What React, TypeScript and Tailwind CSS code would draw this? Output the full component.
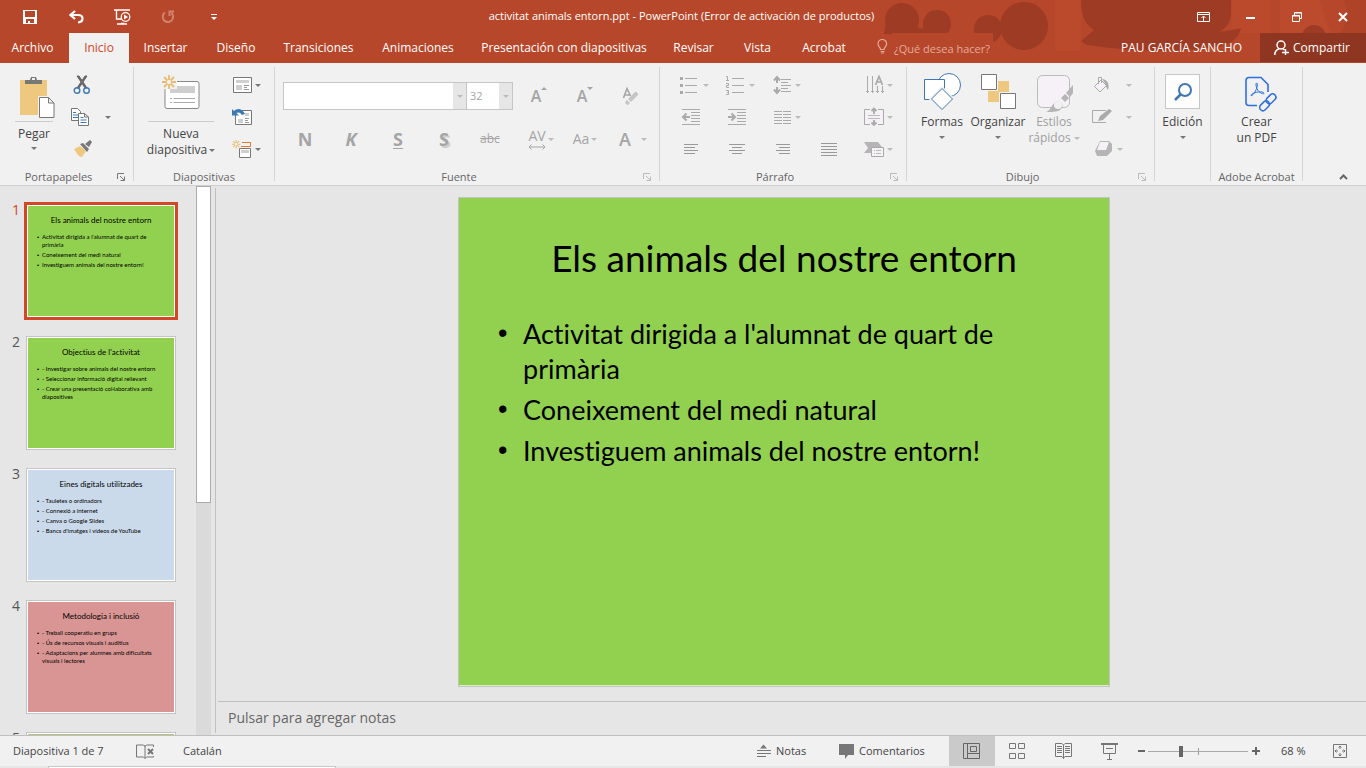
import type { ReactNode } from "react";
import clsx from "clsx";

interface IconProps {
  w: number;
  h: number;
  className?: string;
  children: ReactNode;
}

const Icon = ({ w, h, className, children }: IconProps) => (
  <svg
    width={w}
    height={h}
    viewBox={`0 0 ${w} ${h}`}
    fill="none"
    className={clsx("shrink-0", className)}
    aria-hidden="true"
  >
    {children}
  </svg>
);

const Caret = ({ className }: { className?: string }) => (
  <Icon w={6} h={3} className={className ?? "text-[#777]"}>
    <path d="M0 0h6L3 3z" fill="currentColor" />
  </Icon>
);

const IconButton = ({
  label,
  className,
  children,
}: {
  label: string;
  className?: string;
  children: ReactNode;
}) => (
  <button
    type="button"
    aria-label={label}
    className={clsx("flex items-center", className)}
  >
    {children}
  </button>
);

/* ---------- Title bar ---------- */

const HeaderArt = () => (
  <svg
    className="absolute right-0 top-0 h-[51px] w-[496px]"
    viewBox="0 0 496 51"
    aria-hidden="true"
  >
    <rect width="496" height="51" fill="#b7472a" />
    <path d="M185 0h26v51h-26zM362 0h38v33h-38z" fill="#bb4a2d" />
    <path d="M410 0h40l10 33h-50z" fill="#bc4b2e" />
    <g fill="#9e3b24">
      <circle cx="32" cy="20" r="17" />
      <circle cx="67" cy="24" r="14" />
      <path d="M16 22l-2 12 20 1 44-2z" />
      <circle cx="118" cy="29" r="14" />
      <circle cx="154" cy="26" r="24" />
      <path d="M211 0h150v12c0 10-5 17-13 20 9-1 15-2 23-4-2 10-9 15-20 18-40 7-90 6-132-1-3 0-5-2-8-4l13-11C214 24 211 14 211 0z" />
      <circle cx="444" cy="37" r="12" />
      <path d="M474 0h22v33h-26c6-8 8-20 4-33z" opacity=".3" />
    </g>
  </svg>
);

const TitleBar = () => (
  <div className="relative flex h-[33px] items-center text-white">
    <div className="flex flex-1 items-center pl-[23px]">
      <IconButton label="Guardar" className="w-[46px]">
        <Icon w={14} h={14}>
          <path
            d="M0 0h14v14H0zM2 1v6h10V1zM3 9v4h2v-2h2v2h4V9z"
            fill="currentColor"
            fillRule="evenodd"
          />
        </Icon>
      </IconButton>
      <IconButton label="Deshacer" className="w-[45px]">
        <Icon w={15} h={14}>
          <path
            d="M6 1L1.500 5 6 9M2 5h7c6 0 6 7 0 7.500"
            stroke="currentColor"
            strokeWidth="2.200"
          />
        </Icon>
      </IconButton>
      <IconButton label="Presentación desde el principio" className="w-[47px]">
        <Icon w={17} h={16}>
          <path d="M0 1h16M2.500 1v9h5M7 14.500h3M3 15h10" stroke="currentColor" strokeWidth="1.400" />
          <circle cx="11.500" cy="8" r="4.300" stroke="currentColor" strokeWidth="1.200" />
          <path d="M10 5.500v5L14 8z" fill="currentColor" />
        </Icon>
      </IconButton>
      <IconButton label="Rehacer" className="w-[50px] text-[#d28370]">
        <Icon w={14} h={14}>
          <path
            d="M4 2.500A5.200 5.200 0 1 0 10.500 3M8.500 6V1.500H13"
            stroke="currentColor"
            strokeWidth="2"
          />
        </Icon>
      </IconButton>
      <IconButton label="Personalizar barra de acceso rápido">
        <Icon w={6} h={6}>
          <path d="M0 .5h6" stroke="currentColor" />
          <path d="M0 3h6L3 6z" fill="currentColor" />
        </Icon>
      </IconButton>
    </div>
    <h1 className="whitespace-nowrap pr-2 text-[11px]">
      activitat animals entorn.ppt - PowerPoint (Error de activación de productos)
    </h1>
    <div className="flex flex-1 items-center justify-end gap-9 pr-[18px]">
      <IconButton label="Opciones de presentación de la cinta">
        <Icon w={13} h={10}>
          <path d="M.5.500h12v9H.500zM.500 2.500h12M6.500 9V4.500M4.500 6l2-2 2 2" stroke="currentColor" />
        </Icon>
      </IconButton>
      <IconButton label="Minimizar">
        <Icon w={10} h={10}>
          <path d="M0 6h9" stroke="currentColor" strokeWidth="2" />
        </Icon>
      </IconButton>
      <IconButton label="Restaurar">
        <Icon w={10} h={10}>
          <path d="M.5 3.500h7v6h-7zM0 4h8M2.500 3V.500h7v6H8M2.500 1H9" stroke="currentColor" />
        </Icon>
      </IconButton>
      <IconButton label="Cerrar">
        <Icon w={10} h={10}>
          <path d="M1 1l8 8M9 1L1 9" stroke="currentColor" strokeWidth="2" />
        </Icon>
      </IconButton>
    </div>
  </div>
);

const tabs = [
  { name: "Archivo", width: "w-[65px] pr-2" },
  { name: "Inicio", width: "w-[60px]", active: true },
  { name: "Insertar", width: "w-[73px]" },
  { name: "Diseño", width: "w-[68px]" },
  { name: "Transiciones", width: "w-[97px]" },
  { name: "Animaciones", width: "w-[102px]" },
  { name: "Presentación con diapositivas", width: "w-[190px]" },
  { name: "Revisar", width: "w-[69px]" },
  { name: "Vista", width: "w-[59px]" },
  { name: "Acrobat", width: "w-[74px]" },
];

const TabBar = () => (
  <div className="relative flex h-[30px] text-xs text-white">
    <nav className="flex pl-1">
      {tabs.map((tab) => (
        <button
          key={tab.name}
          type="button"
          className={clsx(
            "whitespace-nowrap text-center",
            tab.width,
            tab.active && "bg-[#f1f1f1] text-[#d24726]"
          )}
        >
          {tab.name}
        </button>
      ))}
    </nav>
    <label className="flex h-[19px] items-center gap-1 pl-4 text-[#e3aa9c]">
      <Icon w={11} h={15} className="mt-2">
        <path
          d="M3.500 10.500C3.500 8 1 7.500 1 4.800a4.300 4.300 0 0 1 8.600 0c0 2.700-2.500 3.200-2.500 5.700zM3.500 12.500h4M4 14h3"
          stroke="currentColor"
          strokeWidth="1.200"
        />
      </Icon>
      <input
        type="text"
        aria-label="¿Qué desea hacer?"
        placeholder="¿Qué desea hacer?"
        className="h-[30px] w-[101px] self-start bg-[#b7472a] pl-[2px] text-[11px] placeholder:text-[#e3aa9c]"
      />
    </label>
    <div className="ml-auto flex items-center">
      <button type="button" className="whitespace-nowrap pr-[18px]">
        PAU GARCÍA SANCHO
      </button>
      <button
        type="button"
        className="flex h-[29px] w-[106px] items-center gap-1 self-start bg-[#8e3621] pl-[14px]"
      >
        <Icon w={15} h={15}>
          <circle cx="7" cy="5" r="4" stroke="currentColor" strokeWidth="1.500" />
          <path d="M.8 15c0-4 2-5.500 4.500-6.500M8.500 8.500l2 1.500M8 12.500h7M11.500 9v6" stroke="currentColor" strokeWidth="1.500" />
        </Icon>
        Compartir
      </button>
    </div>
  </div>
);

/* ---------- Ribbon ---------- */

const Launcher = ({ muted }: { muted?: boolean }) => (
  <button
    type="button"
    aria-label="Más opciones"
    className={clsx("absolute right-2 top-1", muted ? "text-[#bbb]" : "text-[#777]")}
  >
    <Icon w={8} h={8}>
      <path d="M.5 6V.500H7M3 3l4 4M7.500 3.500v4h-4" stroke="currentColor" />
    </Icon>
  </button>
);

interface GroupProps {
  title?: string;
  width: string;
  launcher?: "normal" | "muted";
  children: ReactNode;
}

const Group = ({ title, width, launcher, children }: GroupProps) => (
  <section className={clsx("flex shrink-0", width)}>
    <div className="flex min-w-0 flex-1 flex-col">
      <div className="flex h-[98px] pt-[2px]">{children}</div>
      <div
        className={clsx(
          "relative mt-1 h-4 whitespace-nowrap text-center text-[11px] leading-4 text-[#666]",
          launcher && "pr-4"
        )}
      >
        {title}
        {launcher && <Launcher muted={launcher === "muted"} />}
      </div>
    </div>
    <div className="h-[114px] w-px bg-[#d4d4d4]" />
  </section>
);

const Clipboard = () => (
  <Group title="Portapapeles" width="w-[134px]" launcher="normal">
    <button
      type="button"
      className="ml-[15px] flex w-[38px] flex-col items-center pt-1 leading-4"
    >
      <Icon w={38} h={48} className="ml-1">
        <path d="M3 7h27v35H3z" fill="#edc87e" />
        <path d="M8 11V7h5l1-3h5l1 3h5v4z" fill="#777" />
        <path d="M15 5h3v2h-3z" fill="#f1f1f1" />
        <path d="M21 23h17v23H21z" fill="#f1f1f1" />
        <path d="M22.500 24.500h9l5.500 5.500v14.500H22.500zM31.500 24.500V30H37" fill="#fff" stroke="#777" />
      </Icon>
      <span className="h-px w-full bg-[#cdcdcd]" />
      <span className="mt-1">Pegar</span>
      <Caret className="mt-[5px] text-[#777]" />
    </button>
    <div className="ml-[18px] flex w-[22px] flex-col">
      <IconButton label="Cortar" className="h-8">
        <Icon w={22} h={20}>
          <path d="M6 1l2 0 8 12h-2zM16 1h-2L6 13h2z" fill="#666" stroke="#666" />
          <circle cx="6" cy="15.500" r="2.800" stroke="#3e78b3" strokeWidth="1.400" />
          <circle cx="15.500" cy="15.500" r="2.800" stroke="#3e78b3" strokeWidth="1.400" />
        </Icon>
      </IconButton>
      <IconButton label="Copiar" className="h-8">
        <Icon w={20} h={20}>
          <path d="M.5 1.500h6l3 3v9h-9z" fill="#fff" stroke="#777" />
          <path d="M2 5.500h3M2 8h5M2 10.500h5" stroke="#3e78b3" />
          <path d="M7.500 6.500h6l4 3.500v8.500h-10zM13.500 6.500V10h4" fill="#fff" stroke="#777" />
          <path d="M9.500 10.500h3M9.500 13h6M9.500 15.500h6" stroke="#3e78b3" />
        </Icon>
      </IconButton>
      <IconButton label="Copiar formato" className="h-8">
        <Icon w={22} h={18}>
          <path d="M3 9l6-3 6 5-4 6c-3 0-5-3-8-8z" fill="#edc87e" />
          <path d="M9 4l3-1 6 6-2 3zM14 4l5-4 2 2-3 5z" fill="#777" />
        </Icon>
      </IconButton>
    </div>
    <button type="button" aria-label="Opciones de copiar" className="ml-3 self-center">
      <Caret />
    </button>
  </Group>
);

const Star = () => (
  <path
    d="M7 0v5M7 9v5M0 7h5M9 7h5M2 2l3.500 3.500M12 2L8.500 5.500M2 12l3.500-3.500M12 12L8.500 8.500"
    stroke="#e8bd72"
    strokeWidth="1.800"
  />
);

const Slides = () => (
  <Group title="Diapositivas" width="w-[141px]">
    <button
      type="button"
      className="ml-[14px] flex w-[66px] flex-col items-center whitespace-nowrap pt-1 leading-4"
    >
      <Icon w={40} h={48}>
        <rect x="4" y="8.500" width="34" height="27" rx="2" fill="#fff" stroke="#888" />
        <path d="M9 13h25v7H9z" fill="#cfcfcf" />
        <path d="M9 25.500h2M12.500 25.500H34M9 29.500h2M12.500 29.500H34" stroke="#aaa" />
        <path d="M1 2h15v14H1z" fill="#f1f1f1" />
        <g transform="translate(1 2)">
          <Star />
        </g>
      </Icon>
      <span className="h-px w-full bg-[#cdcdcd]" />
      <span className="mt-1">Nueva</span>
      <span className="flex items-center gap-[2px]">
        diapositiva
        <Caret />
      </span>
    </button>
    <div className="ml-[18px] flex flex-col">
      <IconButton label="Diseño" className="h-8 gap-[2px]">
        <Icon w={21} h={20}>
          <path d="M1.500 2.500h18v15h-18z" fill="#fff" stroke="#777" />
          <path d="M4 5h13v3H4zM4 10h6v5H4z" fill="#cfcfcf" />
          <path d="M12 10.500h5M12 12.500h3M12 14.500h5" stroke="#999" />
        </Icon>
        <Caret />
      </IconButton>
      <IconButton label="Restablecer" className="h-8">
        <Icon w={21} h={20}>
          <path d="M3.500 3.500h16v14h-16z" fill="#fff" stroke="#777" />
          <path d="M13 6h4v3h-4zM6 12h5v4H6z" fill="#cfcfcf" />
          <path d="M13 11.500h4M13 13.500h3M13 15.500h4" stroke="#999" />
          <path d="M0 2l2 2c3-3 8-3 11 3l-3 1C8 5 6 5 4.500 6L7 8.500H0z" fill="#3e78b3" />
        </Icon>
      </IconButton>
      <IconButton label="Sección" className="h-8 gap-[2px]">
        <Icon w={21} h={20}>
          <path d="M10 3.500h8.500v4H9" stroke="#e07b2e" />
          <path d="M7.500 9.500h11v9h-11z" fill="#fff" stroke="#777" />
          <path d="M9 11h8v3H9z" fill="#cfcfcf" />
          <g transform="translate(0 1) scale(.6)">
            <Star />
          </g>
        </Icon>
        <Caret />
      </IconButton>
    </div>
  </Group>
);

const cell = "flex h-8 w-[46px] items-center justify-center";

const FontGroup = () => (
  <Group title="Fuente" width="w-[385px]" launcher="muted">
    <div className="flex flex-col gap-[11px] pl-[7px] pt-[11px] text-[#a5a5a5]">
      <div className="flex h-8 items-center">
        <div className="flex w-[232px] pl-px">
          <div className="relative">
            <select
              aria-label="Fuente"
              className="h-7 w-[184px] appearance-none border border-[#c6c6c6] bg-white"
            >
              <option></option>
            </select>
            <span className="pointer-events-none absolute inset-y-px right-px flex w-[13px] items-center justify-center bg-[#e6e6e6]">
              <Caret className="text-[#bbb]" />
            </span>
          </div>
          <div className="relative">
            <select
              aria-label="Tamaño de fuente"
              className="h-7 w-[46px] appearance-none border border-l-0 border-[#c6c6c6] bg-white pl-[3px] text-[11px]"
            >
              <option>32</option>
            </select>
            <span className="pointer-events-none absolute inset-y-px right-px flex w-[13px] items-center justify-center bg-[#e6e6e6]">
              <Caret className="text-[#bbb]" />
            </span>
          </div>
        </div>
        <IconButton label="Aumentar tamaño de fuente" className={clsx(cell, "pl-1")}>
          <span className="text-base font-semibold">A</span>
          <Icon w={6} h={18}>
            <path d="M0 3h6L3 0z" fill="currentColor" />
          </Icon>
        </IconButton>
        <IconButton label="Disminuir tamaño de fuente" className={clsx(cell, "pl-1")}>
          <span className="text-base font-semibold">A</span>
          <Icon w={6} h={18}>
            <path d="M0 0h6L3 3z" fill="currentColor" />
          </Icon>
        </IconButton>
        <IconButton label="Borrar formato" className={clsx(cell, "pl-1")}>
          <Icon w={18} h={20}>
            <path d="M1.500 12L5 2.500 8.500 10M3 9h5" stroke="currentColor" strokeWidth="1.600" />
            <path d="M6 13l7-7c1-1 4 2 3 3l-7 7z" fill="#c5c5c8" />
            <path d="M5 14l3 3-2 2c-1 0-3-2-3-3z" fill="#c5c5c8" />
          </Icon>
        </IconButton>
      </div>
      <div className="flex h-8 items-center">
        <button type="button" className={clsx(cell, "text-lg font-bold")}>N</button>
        <button type="button" className={clsx(cell, "text-lg font-bold italic")}>K</button>
        <button type="button" className={clsx(cell, "pl-[2px] text-lg font-bold underline decoration-1 underline-offset-2")}>S</button>
        <button type="button" className={clsx(cell, "pl-[2px] text-lg font-bold [text-shadow:2px_2px_1px_#ccc]")}>S</button>
        <button type="button" className={clsx(cell, "pl-[2px] text-xs line-through")}>abc</button>
        <IconButton label="Espaciado entre caracteres" className={cell}>
          <span className="flex flex-col items-center pl-3 text-sm leading-4">
            AV
            <Icon w={18} h={6}>
              <path d="M1 3h16M3.500.500L1 3l2.500 2.500M14.500.500L17 3l-2.500 2.500" stroke="currentColor" />
            </Icon>
          </span>
          <Caret className="ml-[2px] text-[#bbb]" />
        </IconButton>
        <button type="button" className={clsx(cell, "gap-[2px] pl-2 text-sm")}>
          Aa
          <Caret className="text-[#bbb]" />
        </button>
        <button type="button" className={clsx(cell, "gap-[10px] pl-3 text-lg font-semibold")}>
          A
          <Caret className="text-[#bbb]" />
        </button>
      </div>
    </div>
  </Group>
);

const paragraphTools: { label: string; caret?: boolean; art: ReactNode }[][] = [
  [
    {
      label: "Viñetas",
      caret: true,
      art: (
        <>
          <path d="M5 3.500h12M5 10.500h12M5 17.500h12" stroke="#aaa" />
          <path d="M0 2h3v3H0zM0 9h3v3H0zM0 16h3v3H0z" fill="#aaa" />
        </>
      ),
    },
    {
      label: "Numeración",
      caret: true,
      art: (
        <path
          d="M6 3.500h12M6 10.500h12M6 17.500h12M0 1.500h1.500v4M0 5.500h3M0 8.500h2.500v2H.500v2H3M0 15.500h2.500v4H0M1 17.500h1"
          stroke="#aaa"
        />
      ),
    },
    {
      label: "Interlineado",
      caret: true,
      art: (
        <>
          <path d="M9 4.500h10M9 7.500h7M9 10.500h10M9 13.500h7M9 16.500h10" stroke="#aaa" />
          <path d="M5 2v6M2 5.500L5 2l3 3.500M5 12v6M2 14.500L5 18l3-3.500" stroke="#aaa" strokeWidth="2" />
        </>
      ),
    },
  ],
  [
    {
      label: "Disminuir nivel de lista",
      art: (
        <>
          <path d="M2 2.500h18M11 5.500h9M11 8.500h9M11 11.500h9M11 14.500h9M2 17.500h18" stroke="#aaa" />
          <path d="M10 10H3M6.500 6.500L3 10l3.500 3.500" stroke="#aaa" strokeWidth="2" />
        </>
      ),
    },
    {
      label: "Aumentar nivel de lista",
      art: (
        <>
          <path d="M2 2.500h18M11 5.500h9M11 8.500h9M11 11.500h9M11 14.500h9M2 17.500h18" stroke="#aaa" />
          <path d="M2 10h7M5.500 6.500L9 10l-3.500 3.500" stroke="#aaa" strokeWidth="2" />
        </>
      ),
    },
    {
      label: "Columnas",
      caret: true,
      art: (
        <path
          d="M2 4.500h8M11 4.500h8M2 7.500h8M11 7.500h8M2 10.500h8M11 10.500h8M2 13.500h8M11 13.500h8M2 16.500h8M11 16.500h8"
          stroke="#aaa"
        />
      ),
    },
  ],
  [
    {
      label: "Alinear a la izquierda",
      art: <path d="M4 5.500h14M4 8.500h11M4 11.500h14M4 14.500h11" stroke="#999" />,
    },
    {
      label: "Centrar",
      art: <path d="M3 5.500h16M6 8.500h10M3 11.500h16M6 14.500h10" stroke="#999" />,
    },
    {
      label: "Alinear a la derecha",
      art: <path d="M4 5.500h14M7 8.500h11M4 11.500h14M7 14.500h11" stroke="#999" />,
    },
    {
      label: "Justificar",
      art: <path d="M3 4.500h16M3 7.500h16M3 10.500h16M3 13.500h16M3 16.500h16" stroke="#999" />,
    },
  ],
];

const Paragraph = () => (
  <Group title="Párrafo" width="w-[247px]" launcher="muted">
    <div className="flex w-[184px] flex-col pl-2">
      {paragraphTools.map((row, i) => (
        <div key={i} className="flex h-8">
          {row.map((tool) => (
            <IconButton
              key={tool.label}
              label={tool.label}
              className="w-[46px] shrink-0 gap-[3px] pl-3"
            >
              <Icon w={20} h={20}>{tool.art}</Icon>
              {tool.caret && <Caret className="text-[#bbb]" />}
            </IconButton>
          ))}
        </div>
      ))}
    </div>
    <div className="ml-2 flex flex-col pl-3">
      <IconButton label="Dirección del texto" className="h-8 gap-[3px]">
        <Icon w={20} h={20}>
          <path d="M3.500 1v17M8.500 1v17M13.500 11v7M18.500 11v7M2 16.500h3M7 16.500h3M12 16.500h3M17 16.500h3" stroke="#aaa" />
          <path d="M11.500 10L15 1.500 18.500 10M13 7h4.500" stroke="#aaa" strokeWidth="1.700" />
        </Icon>
        <Caret className="text-[#bbb]" />
      </IconButton>
      <IconButton label="Alinear texto" className="h-8 gap-[3px]">
        <Icon w={20} h={20}>
          <path d="M6 2.500H.500v15H6M14 2.500h5.500v15H14" fill="#f6f1f6" stroke="#aaa" />
          <path d="M4 8.500h12M4 11.500h12" stroke="#bbb" />
          <path d="M10 1v6M7.500 4L10 1.500 12.500 4M10 13v5M7.500 15.500L10 18l2.500-2.500" stroke="#aaa" strokeWidth="1.800" />
        </Icon>
        <Caret className="text-[#bbb]" />
      </IconButton>
      <IconButton label="Convertir en SmartArt" className="h-8 gap-[3px]">
        <Icon w={20} h={20}>
          <path d="M0 3h14l4 5H8v6H0l4-5z" fill="#b5b5b5" />
          <path d="M7.500 8.500h12v9h-12z" fill="#f6f1f6" stroke="#aaa" />
          <path d="M10 11.500h1M12 11.500h5M10 14.500h1M12 14.500h5" stroke="#bbb" />
        </Icon>
        <Caret className="text-[#bbb]" />
      </IconButton>
    </div>
  </Group>
);

const LargeButton = ({
  className,
  icon,
  children,
}: {
  className: string;
  icon: ReactNode;
  children: ReactNode;
}) => (
  <button
    type="button"
    className={clsx(
      "flex flex-col items-center whitespace-nowrap pt-1 leading-4",
      className
    )}
  >
    {icon}
    {children}
  </button>
);

const Drawing = () => (
  <Group title="Dibujo" width="w-[248px]" launcher="muted">
    <LargeButton
      className="ml-[7px] w-14"
      icon={
        <Icon w={38} h={41}>
          <circle cx="26" cy="12" r="11.500" fill="#fff" stroke="#3e78b3" />
          <path d="M1.500 6.500h20v20h-20z" fill="#fff" stroke="#3e78b3" />
          <path d="M19 15l11 11-11 11L8 26z" fill="#fff" stroke="#f1f1f1" strokeWidth="3" />
          <path d="M19 15.500L29.500 26 19 36.500 8.500 26z" fill="#fff" stroke="#3e78b3" />
        </Icon>
      }
    >
      Formas
      <Caret className="mt-[6px] text-[#777]" />
    </LargeButton>
    <LargeButton
      className="w-14"
      icon={
        <Icon w={36} h={41}>
          <path d="M18 8h11v11H18zM8 18h11v11H8z" fill="#edc87e" />
          <path d="M1.500 1.500h15v15h-15zM20.500 20.500h15v15h-15z" fill="#fff" stroke="#777" />
        </Icon>
      }
    >
      Organizar
      <Caret className="mt-[6px] text-[#777]" />
    </LargeButton>
    <LargeButton
      className="w-14 text-[#a0a0a0]"
      icon={
        <Icon w={40} h={41}>
          <rect x="3.500" y="2.500" width="32" height="32" rx="5" fill="#f5f1f7" stroke="#bbb" />
          <path d="M39 12v8l-3 4-4-4zM31 21l4 4-4 4-4-4z" fill="#b5b5b5" />
          <path d="M12 39c5-1 6-10 12-11 5 1 6 6 2 9-3 2-9 2-14 2z" fill="#b5b5b5" />
          <circle cx="24" cy="32" r="4" fill="#f1f1f1" />
        </Icon>
      }
    >
      Estilos
      <span className="flex items-center gap-[3px]">
        rápidos
        <Caret className="text-[#bbb]" />
      </span>
    </LargeButton>
    <div className="ml-2 flex flex-col pl-[2px]">
      <IconButton label="Relleno de forma" className="h-8 w-10 justify-between">
        <Icon w={18} h={18}>
          <path d="M2.500 10.500L9 4l5.500 5.500L8 16zM6.500 8V1.500h3V7" fill="#f5f1f7" stroke="#aaa" />
          <path d="M10 3c5 0 8 5 6 11-2-2-2-5-3-7z" fill="#aaa" />
        </Icon>
        <Caret className="text-[#bbb]" />
      </IconButton>
      <IconButton label="Contorno de forma" className="h-8 w-10 justify-between">
        <Icon w={20} h={18}>
          <path d="M14 2.500H.500v12H14" stroke="#aaa" />
          <path d="M6 13l2-5 9-7 3 2-9 9z" fill="#aaa" />
        </Icon>
        <Caret className="text-[#bbb]" />
      </IconButton>
      <IconButton label="Efectos de forma" className="h-8 gap-1 pl-[2px]">
        <Icon w={19} h={18}>
          <path d="M6 1h9l3 3v7l-5 5H3l-2-5z" fill="#b5b5b5" />
          <path d="M6 2h9l-3 8H3z" fill="#f5f1f7" />
        </Icon>
        <Caret className="text-[#bbb]" />
      </IconButton>
    </div>
  </Group>
);

const Ribbon = () => (
  <div className="flex h-[123px] border-b border-[#d0d0d0] bg-[#f1f1f1] pt-1 text-xs text-[#444]">
    <Clipboard />
    <Slides />
    <FontGroup />
    <Paragraph />
    <Drawing />
    <Group width="w-[56px]">
      <LargeButton
        className="w-full"
        icon={
          <span className="mb-[5px] mt-px flex h-[35px] w-[35px] items-center justify-center border border-[#c6c6c6] bg-[#fdfdfd]">
            <Icon w={18} h={18}>
              <circle cx="11" cy="7" r="6" stroke="#3e78b3" strokeWidth="2" />
              <path d="M7 11l-6 6" stroke="#3e78b3" strokeWidth="2.500" />
            </Icon>
          </span>
        }
      >
        Edición
        <Caret className="mt-[6px] text-[#777]" />
      </LargeButton>
    </Group>
    <Group title="Adobe Acrobat" width="w-[92px]">
      <LargeButton
        className="w-full"
        icon={
          <Icon w={34} h={41} className="ml-2">
            <path d="M13 32.500H5a3 3 0 0 1-3-3v-22a3 3 0 0 1 3-3h12l7 7V19" stroke="#2f6fe0" strokeWidth="1.600" />
            <path
              d="M12.500 10c1.500 0 1 4-1 8-1.500 3-4 5.500-4.500 4.500s3-3 7-3.500 6.500.5 6 1.500-4-.5-6-3-2.500-7.500-1.500-7.500z"
              stroke="#2f6fe0"
            />
            <g stroke="#2f6fe0" strokeWidth="1.500">
              <rect x="-5" y="-3" width="11" height="6.500" rx="3.200" transform="translate(20 33) rotate(-45)" />
              <rect x="-5" y="-3" width="11" height="6.500" rx="3.200" transform="translate(26.500 26) rotate(-45)" />
            </g>
          </Icon>
        }
      >
        <span>Crear</span>
        <span>un PDF</span>
      </LargeButton>
    </Group>
    <button
      type="button"
      aria-label="Contraer la cinta de opciones"
      className="mb-[5px] ml-auto mr-[18px] self-end text-[#666]"
    >
      <Icon w={9} h={6}>
        <path d="M1 5l3.500-3.500L8 5" stroke="currentColor" strokeWidth="2" />
      </Icon>
    </button>
  </div>
);

/* ---------- Slides ---------- */

const slides = [
  {
    title: "Els animals del nostre entorn",
    color: "bg-[#92d14f]",
    points: [
      "Activitat dirigida a l'alumnat de quart de primària",
      "Coneixement del medi natural",
      "Investiguem animals del nostre entorn!",
    ],
  },
  {
    title: "Objectius de l'activitat",
    color: "bg-[#92d14f]",
    points: [
      "- Investigar sobre animals del nostre entorn",
      "- Seleccionar informació digital rellevant",
      "- Crear una presentació col·laborativa amb diapositives",
    ],
  },
  {
    title: "Eines digitals utilitzades",
    color: "bg-[#cadaea]",
    points: [
      "- Tauletes o ordinadors",
      "- Connexió a internet",
      "- Canva o Google Slides",
      "- Bancs d'imatges i vídeos de YouTube",
    ],
  },
  {
    title: "Metodologia i inclusió",
    color: "bg-[#d99593]",
    points: [
      "- Treball cooperatiu en grups",
      "- Ús de recursos visuals i auditius",
      "- Adaptacions per alumnes amb dificultats visuals i lectores",
    ],
  },
  { title: "", color: "bg-[#b3c283]", points: [] },
];

const slideFont = "font-[Lato,sans-serif] text-black [font-variant-ligatures:none]";

const Thumbnails = () => (
  <ol className="flex w-[196px] flex-col gap-[18px] overflow-hidden pl-3 pt-[18px]">
    {slides.map((slide, i) => (
      <li key={i} className="flex h-[114px] shrink-0">
        <span
          className={clsx(
            "w-[14px] text-sm leading-3",
            i === 0 ? "text-[#d24726]" : "text-[#555]"
          )}
        >
          {i + 1}
        </span>
        <button
          type="button"
          aria-label={`Diapositiva ${i + 1}`}
          className={clsx(
            "w-[150px] border bg-white p-px text-left",
            slideFont,
            i === 0 ? "border-[#d24726] ring-2 ring-[#d24726]" : "border-[#c4c4c4]"
          )}
        >
          <span className={clsx("flex h-full flex-col pt-2", slide.color)}>
            <span className="text-center text-[8px] leading-3">{slide.title}</span>
            <span className="flex flex-col gap-[2px] pl-[9px] pr-3 pt-[7px] text-[6px] leading-[8px]">
              {slide.points.map((point) => (
                <span key={point} className="flex">
                  <span className="w-[5px] shrink-0 font-['Liberation_Sans',sans-serif]">•</span>
                  {point}
                </span>
              ))}
            </span>
          </span>
        </button>
      </li>
    ))}
  </ol>
);

const Workspace = () => (
  <div className="flex min-h-0 flex-1 bg-[#e6e6e6]">
    <Thumbnails />
    <div className="w-[15px] bg-[#dadada]">
      <div className="h-[317px] border border-[#ababab] bg-white" />
    </div>
    <div className="my-[2px] ml-1 mr-[2px] w-px bg-[#c0c0c0]" />
    <main className="flex min-w-0 flex-1 flex-col">
      <div className="flex min-h-0 flex-1 justify-center pr-4 pt-[11px]">
        <article
          className={clsx(
            "h-[490px] w-[652px] shrink-0 border border-[#c3c3c3] bg-[#92d14f] shadow-[inset_0_-1px_#d8efc0]",
            slideFont
          )}
        >
          <h2 className="pt-9 text-center text-[37px] leading-[48px]">
            {slides[0].title}
          </h2>
          <ul className="flex flex-col gap-[6px] pl-[39px] pr-20 pt-[34px] text-[27px] leading-[35px]">
            {slides[0].points.map((point) => (
              <li key={point} className="flex">
                <span className="w-[25px] shrink-0 font-['Liberation_Sans',sans-serif]">•</span>
                {point}
              </li>
            ))}
          </ul>
        </article>
      </div>
      <p className="h-[34px] border-t border-[#c0c0c0] pl-[10px] text-sm leading-8 text-[#666]">
        Pulsar para agregar notas
      </p>
    </main>
  </div>
);

/* ---------- Status bar ---------- */

const StatusBar = () => (
  <footer className="bg-[#f1f1f1]">
    <div className="flex h-[31px] items-center border-t border-[#bfbfbf] text-[11px] text-[#444]">
      <span className="w-[136px] pl-[13px]">Diapositiva 1 de 7</span>
      <IconButton label="Revisión ortográfica" className="w-[47px]">
        <Icon w={18} h={15}>
          <path d="M9 2.500L7.500 1H.500v12h7L9 14.500V1M9 2.500L10.500 1h7v2M17.500 12v1h-7L9 14.500" stroke="#777" />
          <path d="M12 5l5 5M17 5l-5 5" stroke="#777" strokeWidth="2" />
        </Icon>
      </IconButton>
      <button type="button">Catalán</button>
      <div className="ml-auto flex h-full items-center">
        <button type="button" className="flex w-[82px] items-center gap-[5px]">
          <Icon w={14} h={14}>
            <path d="M3 4.500h7L6.500.500z" fill="#777" />
            <path d="M0 6.500h14M0 9.500h14M0 12.500h9" stroke="#777" />
          </Icon>
          Notas
        </button>
        <button type="button" className="flex w-[110px] items-center gap-[5px]">
          <Icon w={15} h={15}>
            <path d="M0 0h15v11H9l-3 4v-4H0z" fill="#777" />
          </Icon>
          Comentarios
        </button>
        <IconButton label="Normal" className="h-full w-[46px] justify-center bg-[#cacaca]">
          <Icon w={18} h={16}>
            <path d="M.5.500h16v15H.500zM4.500 1v15M5 10.500h11M7.500 3.500h6v5h-6z" stroke="#666" />
          </Icon>
        </IconButton>
        <IconButton label="Clasificador de diapositivas" className="w-[46px] justify-center">
          <Icon w={18} h={16}>
            <path d="M.5.500h6v5h-6zM9.500.500h6v5h-6zM.500 10.500h6v5h-6zM9.500 10.500h6v5h-6z" stroke="#777" />
          </Icon>
        </IconButton>
        <IconButton label="Vista de lectura" className="w-[46px] justify-center">
          <Icon w={18} h={16}>
            <path
              d="M8.500 2L7 .500H.500v13H7L8.500 15.500V2L10 .500h6.500v13H10L8.500 15.500M2 3.500h5M2 5.500h5M2 7.500h5M2 9.500h5M10 3.500h5M10 5.500h5M10 7.500h5M10 9.500h5"
              stroke="#777"
            />
          </Icon>
        </IconButton>
        <IconButton label="Presentación" className="w-[46px] justify-center">
          <Icon w={18} h={17}>
            <path d="M0 1h17" stroke="#777" strokeWidth="2" />
            <path d="M2.500 1v9.500h12V1M5 5.500h7M8.500 10.500v6M6 16.500h5" stroke="#777" />
          </Icon>
        </IconButton>
        <IconButton label="Alejar" className="ml-[5px] w-[10px]">
          <Icon w={7} h={8}>
            <path d="M0 4h7" stroke="#666" strokeWidth="2" />
          </Icon>
        </IconButton>
        <div className="relative flex w-[100px] items-center">
          <span className="absolute left-1/2 h-[7px] w-px bg-[#999]" />
          <input
            type="range"
            aria-label="Zoom"
            min={0}
            max={100}
            defaultValue={32}
            className="relative h-3 w-full appearance-none bg-transparent [&::-webkit-slider-runnable-track]:h-px [&::-webkit-slider-runnable-track]:bg-[#aaa] [&::-webkit-slider-thumb]:-mt-[5px] [&::-webkit-slider-thumb]:h-[11px] [&::-webkit-slider-thumb]:w-1 [&::-webkit-slider-thumb]:appearance-none [&::-webkit-slider-thumb]:bg-[#666]"
          />
        </div>
        <IconButton label="Acercar" className="w-[33px] pl-1">
          <Icon w={8} h={8}>
            <path d="M0 4h8M4 0v8" stroke="#666" strokeWidth="2" />
          </Icon>
        </IconButton>
        <button type="button" className="w-[52px] text-left">68 %</button>
        <IconButton label="Ajustar a la ventana" className="pr-[19px]">
          <Icon w={14} h={14}>
            <path
              d="M.5.500h13v13H.500zM7 2v3M5.500 3.500L7 2l1.500 1.500M7 12V9M5.500 10.500L7 12l1.500-1.500M2 7h3M3.500 5.500L2 7l1.500 1.500M12 7H9M10.500 5.500L12 7l-1.500 1.500"
              stroke="#777"
            />
          </Icon>
        </IconButton>
      </div>
    </div>
    <div className="flex h-[2px] bg-[#e6e6e6] pl-12">
      <span className="w-72 border-x border-t border-[#c8c8c8] bg-white" />
    </div>
  </footer>
);

export default function App() {
  return (
    <div className="flex h-screen flex-col overflow-hidden font-['Open_Sans','Noto_Sans',sans-serif]">
      <header className="relative shrink-0 bg-[#b7472a]">
        <HeaderArt />
        <TitleBar />
        <TabBar />
      </header>
      <Ribbon />
      <Workspace />
      <StatusBar />
    </div>
  );
}
